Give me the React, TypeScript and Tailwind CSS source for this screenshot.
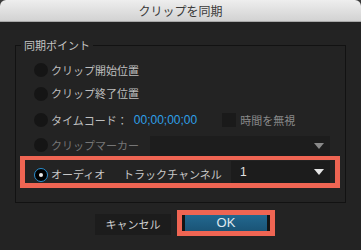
import React from 'react'

const jp = { fontFamily: '"Noto Sans CJK JP", "Noto Sans", sans-serif' }

const Radio = ({ checked = false }: { checked?: boolean }) =>
    checked ? (
        <span className="flex h-[14px] w-[14px] shrink-0 items-center justify-center rounded-full border-[1.5px] border-[#2a8fd0] bg-black">
            <span className="h-[4px] w-[4px] rounded-full bg-[#e8e8e8]" />
        </span>
    ) : (
        <span className="h-[14px] w-[14px] shrink-0 rounded-full bg-[#151515]" />
    )

const Arrow = ({ color }: { color: string }) => (
    <svg width="10" height="6" viewBox="0 0 10 6">
        <polygon points="0,0 10,0 5,6" fill={color} />
    </svg>
)

export default function App() {
    return (
        <div className="h-[250px] w-[361px] overflow-hidden bg-[#3b3b3b]" style={jp}>
            <div className="flex h-full flex-col rounded-t-[6px] bg-[#232323]">
                <div className="flex h-[22px] shrink-0 items-center justify-center rounded-t-[6px] border-b border-[#a8a8a8] bg-gradient-to-b from-[#eeeeee] to-[#d2d2d2] text-[12px] text-[#3a3a3a]">
                    クリップを同期
                </div>

                <fieldset className="mx-[15px] mt-[16px] border border-[#121212] pb-[14px]">
                    <legend className="ml-[5px] px-[3px] text-[11px] leading-[14px] text-[#c4c4c4]">同期ポイント</legend>
                    <div className="flex flex-col pt-[6px] text-[11px] text-[#bebebe]">
                        <div className="flex h-[24px] items-center gap-[3px] pl-[18px]">
                            <Radio />
                            <span>クリップ開始位置</span>
                        </div>
                        <div className="flex h-[23px] items-center gap-[3px] pl-[18px]">
                            <Radio />
                            <span>クリップ終了位置</span>
                        </div>
                        <div className="flex h-[30px] items-center gap-[3px] pl-[18px]">
                            <Radio />
                            <span>タイムコード：</span>
                            <span className="ml-[3px] text-[12px] text-[#2ea0e8]" style={{ fontFamily: '"Liberation Sans", sans-serif' }}>
                                00;00;00;00
                            </span>
                            <span className="ml-[22px] h-[14px] w-[14px] bg-[#1a1a1a]" />
                            <span className="ml-[1px] text-[#8a8a8a]">時間を無視</span>
                        </div>
                        <div className="flex h-[21px] items-start gap-[3px] pl-[18px]">
                            <div className="flex h-[20px] items-center gap-[3px]">
                                <Radio />
                                <span className="w-[96px] text-[#767676]">クリップマーカー</span>
                            </div>
                            <div className="mt-[1px] flex h-[20px] w-[180px] items-center justify-end bg-[#1d1d1d] pr-[6px]">
                                <Arrow color="#8a8a8a" />
                            </div>
                        </div>
                        <div className="ml-[4px] mr-[5px] flex h-[32px] items-center border-[5px] border-t-4 border-[#ef6553] pl-[9px]">
                            <div className="mt-[6px] flex items-center gap-[3px]">
                                <Radio checked />
                                <span className="w-[69px] text-[#c8c8c8]">オーディオ</span>
                                <span className="w-[108px] text-[#c8c8c8]">トラックチャンネル</span>
                            </div>
                            <div className="flex h-[22px] w-[99px] items-center justify-between bg-[#1c1c1c] pl-[9px] pr-[6px]">
                                <span className="text-[12px] text-[#e2e2e2]" style={{ fontFamily: '"Liberation Sans", sans-serif' }}>
                                    1
                                </span>
                                <Arrow color="#e6e6e6" />
                            </div>
                        </div>
                    </div>
                </fieldset>

                <div className="mt-[7px] flex items-start pl-[95px]">
                    <div className="mt-[4px] flex h-[21px] w-[76px] items-center justify-center bg-[#1c1c1c] text-[11px] text-[#cfcfcf]">
                        キャンセル
                    </div>
                    <div className="ml-[6px] h-[26px] w-[98px] border-[5px] border-[#ef6553]">
                        <div className="flex h-full items-center justify-center border-x-[3px] border-[#141414] bg-gradient-to-b from-[#226890] to-[#1a5476] text-[13px] text-[#dfe8ee]" style={{ fontFamily: '"Liberation Sans", sans-serif' }}>
                            OK
                        </div>
                    </div>
                </div>
            </div>
        </div>
    )
}
